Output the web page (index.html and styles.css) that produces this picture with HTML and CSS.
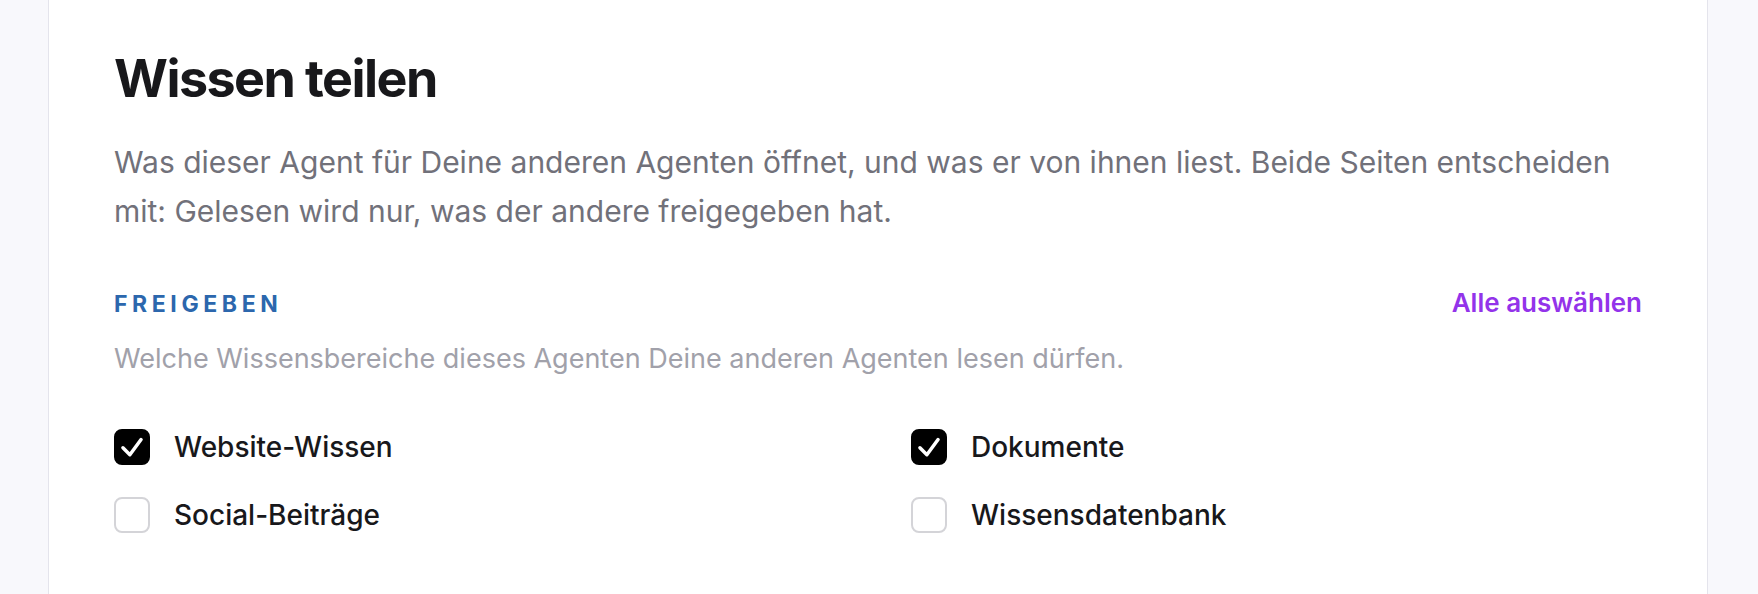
FILE: index.html
```html
<!DOCTYPE html>
<html lang="de">
<head>
  <meta charset="UTF-8" />
  <meta name="viewport" content="width=device-width, initial-scale=1" />
  <title>Wissen teilen</title>
  <link rel="stylesheet" href="styles.css">
</head>
<body>
  <div class="karte">
    <h1>Wissen teilen</h1>
    <p class="intro">Was dieser Agent für Deine anderen Agenten öffnet, und was er von ihnen liest. Beide Seiten entscheiden mit: Gelesen wird nur, was der andere freigegeben hat.</p>

    <div class="abschnitt-kopf">
      <h2>Freigeben</h2>
      <a href="#" class="alle">Alle auswählen</a>
    </div>
    <p class="hinweis">Welche Wissensbereiche dieses Agenten Deine anderen Agenten lesen dürfen.</p>

    <div class="optionen">
      <label class="option">
        <input type="checkbox" checked />
        <span class="box">
          <svg viewBox="0 0 24 24"><path d="M5.2 12.6 L10.4 17.8 L18.8 6.4" /></svg>
        </span>
        Website-Wissen
      </label>
      <label class="option">
        <input type="checkbox" checked />
        <span class="box">
          <svg viewBox="0 0 24 24"><path d="M5.2 12.6 L10.4 17.8 L18.8 6.4" /></svg>
        </span>
        Dokumente
      </label>
      <label class="option">
        <input type="checkbox" />
        <span class="box">
          <svg viewBox="0 0 24 24"><path d="M5.2 12.6 L10.4 17.8 L18.8 6.4" /></svg>
        </span>
        Social-Beiträge
      </label>
      <label class="option">
        <input type="checkbox" />
        <span class="box">
          <svg viewBox="0 0 24 24"><path d="M5.2 12.6 L10.4 17.8 L18.8 6.4" /></svg>
        </span>
        Wissensdatenbank
      </label>
    </div>
  </div>
</body>
</html>
```

FILE: styles.css
```css
* {
  margin: 0;
  padding: 0;
  box-sizing: border-box;
  font-family: Inter, "Noto Sans", sans-serif;
}
body {
  height: 100vh;
  background-color: #f8f8fc;
  padding: 0 50px 0 48px;
  overflow: hidden;
}
.karte {
  height: 100%;
  background-color: #fff;
  border-left: 1px solid #e4e4ec;
  border-right: 1px solid #e4e4ec;
  padding: 49px 65px 0;
}
.karte h1 {
  font-size: 52px;
  line-height: 60px;
  font-weight: 700;
  letter-spacing: -0.03em;
  color: #18181b;
}
.intro {
  margin-top: 29px;
  font-size: 30px;
  line-height: 49px;
  color: #71717a;
}
.abschnitt-kopf {
  margin-top: 51px;
  display: flex;
  justify-content: space-between;
  align-items: baseline;
}
.abschnitt-kopf h2 {
  font-size: 23px;
  line-height: 30px;
  font-weight: 700;
  letter-spacing: 0.2em;
  text-transform: uppercase;
  color: #2c67ad;
}
.alle {
  font-size: 26px;
  font-weight: 600;
  color: #9333ea;
  text-decoration: none;
}
.alle:hover {
  text-decoration: underline;
}
.hinweis {
  margin-top: 22px;
  font-size: 27px;
  line-height: 36px;
  color: #a1a1aa;
}
.optionen {
  margin-top: 52px;
  display: grid;
  grid-template-columns: 1fr 1fr;
  column-gap: 66px;
  row-gap: 32px;
}
.option {
  display: flex;
  align-items: center;
  gap: 24px;
  font-size: 28px;
  line-height: 36px;
  font-weight: 500;
  color: #18181b;
  cursor: pointer;
}
.option input {
  display: none;
}
.box {
  width: 36px;
  height: 36px;
  border: 2px solid #d4d4d8;
  border-radius: 8px;
  background-color: #fff;
  display: flex;
  align-items: center;
  justify-content: center;
}
.box svg {
  width: 32px;
  height: 32px;
  fill: none;
  stroke: #fff;
  stroke-width: 2.6;
  stroke-linecap: round;
  stroke-linejoin: round;
  visibility: hidden;
}
.option input:checked + .box {
  background-color: #000;
  border-color: #000;
}
.option input:checked + .box svg {
  visibility: visible;
}
```
